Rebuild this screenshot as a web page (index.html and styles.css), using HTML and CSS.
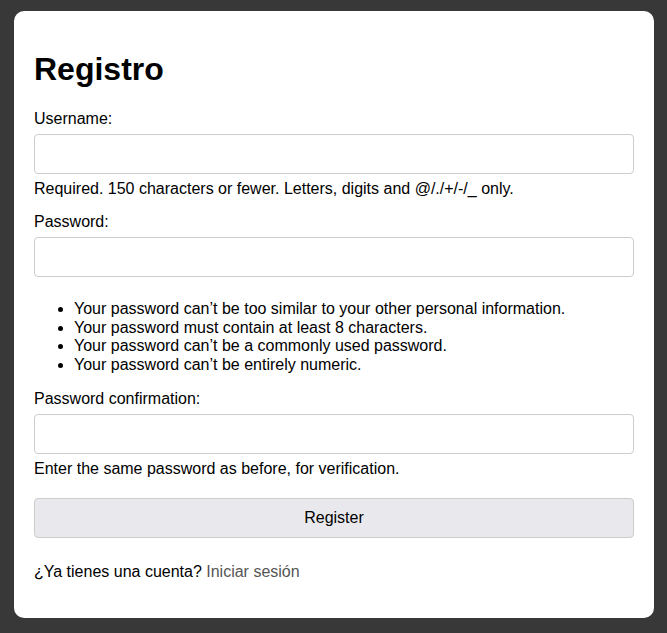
FILE: index.html
```html
<!DOCTYPE html>
<html lang="es">
<head>
<meta charset="utf-8">
<title>Registro</title>
<link rel="stylesheet" href="styles.css">
</head>
<body>
<main class="card">
  <h1 class="title">Registro</h1>
  <form class="form">
    <div class="field">
      <label class="label" for="u">Username:</label>
      <input class="input" id="u" type="text">
      <div class="help">Required. 150 characters or fewer. Letters, digits and @/./+/-/_ only.</div>
    </div>
    <div class="field">
      <label class="label" for="p">Password:</label>
      <input class="input" id="p" type="password">
      <div class="help">
        <ul class="rules">
          <li>Your password can’t be too similar to your other personal information.</li>
          <li>Your password must contain at least 8 characters.</li>
          <li>Your password can’t be a commonly used password.</li>
          <li>Your password can’t be entirely numeric.</li>
        </ul>
      </div>
    </div>
    <div class="field">
      <label class="label" for="c">Password confirmation:</label>
      <input class="input" id="c" type="password">
      <div class="help">Enter the same password as before, for verification.</div>
    </div>
    <button class="btn" type="button">Register</button>
  </form>
  <p class="footer">¿Ya tienes una cuenta? <a class="link" href="#">Iniciar sesión</a></p>
</main>
</body>
</html>
```
FILE: styles.css
```css
html, body {
  margin: 0;
  padding: 0;
  background: #383838;
}
body {
  padding: 11px 13px 15px 14px;
  font-family: "Liberation Sans", Arial, sans-serif;
  font-size: 16px;
  color: #000;
}
.card {
  background: #fff;
  border-radius: 10px;
  padding: 20px 20px 20px;
  height: 567px;
}
.title {
  font-size: 32px;
  font-weight: bold;
  margin: 20px 0 22px;
  line-height: 37px;
}
.form {
  display: block;
}
.field {
  margin-bottom: 15px;
}
.label {
  display: block;
  line-height: 18px;
  margin-bottom: 6px;
}
.input {
  display: block;
  box-sizing: border-box;
  width: 100%;
  height: 40px;
  border: 1px solid #ccc;
  border-radius: 4px;
  padding: 0 10px;
  font: inherit;
  background: #fff;
}
.help {
  margin-top: 6px;
  line-height: 18px;
}
.rules {
  margin: 23px 0 16px;
  padding-left: 40px;
  line-height: 18.5px;
}
.btn {
  display: block;
  box-sizing: border-box;
  width: 100%;
  height: 40px;
  margin-top: 20px;
  border: 1px solid #ccc;
  border-radius: 4px;
  background: #e9e9ed;
  font: inherit;
  color: #000;
}
.field:last-of-type {
  margin-bottom: 0;
}
.footer {
  margin: 25px 0 0;
  line-height: 18px;
}
.link {
  color: #555;
  text-decoration: none;
}
```
